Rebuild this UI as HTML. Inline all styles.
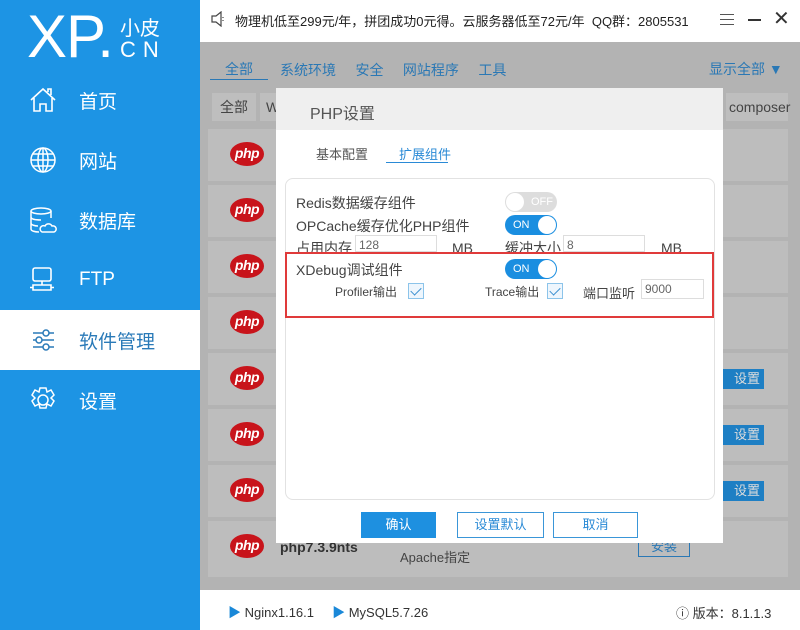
<!DOCTYPE html>
<html><head><meta charset="utf-8"><style>
*{margin:0;padding:0;box-sizing:border-box}
body{width:800px;height:630px;overflow:hidden;position:relative;font-family:"Liberation Sans","Noto Sans CJK SC",sans-serif;background:#b3b3b3}
.abs{position:absolute}
.side{left:0;top:0;width:200px;height:630px;background:#1d94e4;color:#fff}
.nav{position:absolute;left:0;width:200px;height:60px;font-size:19px;display:flex;align-items:center}
.nav svg{position:absolute;left:29px;top:16px}
.nav span{position:absolute;left:79px}
.row{position:absolute;left:208px;width:580px;height:52px;background:#bdbdbd}
.php{position:absolute;left:22px;top:13px;width:34px;height:24px;border-radius:50%;background:#c8141b;color:#fff;font-style:italic;font-weight:bold;font-size:14px;text-align:center;line-height:23px;letter-spacing:-0.5px}
.sw{position:absolute;width:52px;height:20px;border-radius:10px;background:#1a8ee0;color:#fff;font-size:11px;line-height:20px;padding-left:8px}
.sw i{position:absolute;right:1px;top:1px;width:18px;height:18px;border-radius:50%;background:#fff}
.lbl{position:absolute;font-size:14px;color:#444}
.inp{position:absolute;height:20px;border:1px solid #ddd;background:#fff;font-size:12px;color:#666;padding-left:3px;line-height:18px}
.cb{position:absolute;width:16px;height:16px;border:1px solid #8cc4ea;background:#eef6fd}
.cb:after{content:"";position:absolute;left:4px;top:1px;width:5px;height:9px;border:solid #3a8fd0;border-width:0 1.5px 1.5px 0;transform:rotate(45deg)}
.btn{position:absolute;top:512px;height:26px;border:1px solid #3a96d8;font-size:13px;text-align:center;line-height:24px;color:#2a8ad6;background:#fff}
</style></head><body>
<!-- header -->
<div class="abs" style="left:200px;top:0;width:600px;height:42px;background:#fff"></div>
<svg class="abs" style="left:211px;top:11px" width="16" height="16" viewBox="0 0 16 16" fill="none" stroke="#444" stroke-width="1.2"><path d="M1 5h4l5-4v14l-5-4H1z"/><path d="M12 6v1M12 9v1"/></svg>
<div class="abs" style="left:235px;top:11px;font-size:13px;color:#222">物理机低至299元/年，拼团成功0元得。云服务器低至72元/年&nbsp; QQ群：2805531</div>
<div class="abs" style="left:720px;top:14px;width:14px;height:11px;border-top:1px solid #555;border-bottom:1px solid #555"></div>
<div class="abs" style="left:720px;top:19px;width:14px;height:1px;background:#555"></div>
<div class="abs" style="left:748px;top:19px;width:13px;height:2px;background:#333"></div>
<div class="abs" style="left:773px;top:6px;font-size:20px;color:#333">✕</div>
<!-- tabs -->
<div class="abs" style="left:225px;top:59px;font-size:14px;color:#2a78b5">全部</div>
<div class="abs" style="left:210px;top:79px;width:58px;height:1px;background:#2a78b5"></div>
<div class="abs" style="left:280px;top:60px;font-size:14px;color:#2a78b5">系统环境&nbsp;&nbsp;&nbsp;&nbsp;&nbsp;安全&nbsp;&nbsp;&nbsp;&nbsp;&nbsp;网站程序&nbsp;&nbsp;&nbsp;&nbsp;&nbsp;工具</div>
<div class="abs" style="left:709px;top:59px;font-size:14px;color:#2a78b5">显示全部 ▼</div>
<div class="abs" style="left:212px;top:93px;width:44px;height:28px;background:#bebebe;font-size:14px;color:#444;line-height:28px;padding-left:8px">全部</div>
<div class="abs" style="left:260px;top:93px;width:20px;height:28px;background:#bebebe;font-size:14px;color:#444;line-height:28px;padding-left:6px">W</div>
<div class="abs" style="left:726px;top:93px;width:62px;height:28px;background:#bebebe;font-size:14px;color:#444;line-height:28px;padding-left:3px">composer</div>
<!-- rows -->
<div class="row" style="top:129px"><div class="php">php</div></div>
<div class="row" style="top:185px"><div class="php">php</div></div>
<div class="row" style="top:241px"><div class="php">php</div></div>
<div class="row" style="top:297px"><div class="php">php</div></div>
<div class="row" style="top:353px"><div class="php">php</div><div class="abs" style="left:514px;top:16px;width:42px;height:20px;background:#1e7fc4;color:#ddd;font-size:13px;line-height:20px;padding-left:12px">设置</div></div>
<div class="row" style="top:409px"><div class="php">php</div><div class="abs" style="left:514px;top:16px;width:42px;height:20px;background:#1e7fc4;color:#ddd;font-size:13px;line-height:20px;padding-left:12px">设置</div></div>
<div class="row" style="top:465px"><div class="php">php</div><div class="abs" style="left:514px;top:16px;width:42px;height:20px;background:#1e7fc4;color:#ddd;font-size:13px;line-height:20px;padding-left:12px">设置</div></div>
<div class="row" style="top:521px;height:56px"><div class="php">php</div>
<div class="abs" style="left:72px;top:18px;font-size:14px;font-weight:bold;color:#333">php7.3.9nts</div>
<div class="abs" style="left:192px;top:26px;font-size:13px;color:#444">Apache指定</div>
<div class="abs" style="left:430px;top:16px;width:52px;height:20px;border:1px solid #2a78b5;font-size:13px;color:#2a78b5;text-align:center;line-height:18px">安装</div></div>
<!-- footer -->
<div class="abs" style="left:200px;top:590px;width:600px;height:40px;background:#fff"></div>
<div class="abs" style="left:228px;top:602px;font-size:13px;color:#333"><span style="color:#1a88d8">▶</span> Nginx1.16.1&nbsp;&nbsp;&nbsp;&nbsp;&nbsp;<span style="color:#1a88d8">▶</span> MySQL5.7.26</div>
<div class="abs" style="left:676px;top:603px;font-size:13px;color:#333">ⓘ 版本：8.1.1.3</div>
<!-- sidebar -->
<div class="abs side">
<div class="abs" style="left:27px;top:4px;font-size:60px;font-weight:normal;letter-spacing:-1px;line-height:66px">XP.</div>
<div class="abs" style="left:120px;top:12px;font-size:20px">小皮</div>
<div class="abs" style="left:120px;top:37px;font-size:22px;letter-spacing:7px">CN</div>
<div class="nav" style="top:70px"><svg width="28" height="28" viewBox="0 0 28 28" fill="none" stroke="#fff" stroke-width="1.6"><path d="M2 14L14 3l12 11M5 12v13h6v-7h6v7h6V12M19 6V3h3v6"/></svg><span>首页</span></div>
<div class="nav" style="top:130px"><svg width="28" height="28" viewBox="0 0 28 28" fill="none" stroke="#fff" stroke-width="1.5"><circle cx="14" cy="14" r="12"/><ellipse cx="14" cy="14" rx="5" ry="12"/><path d="M2 14h24M4 8h20M4 20h20M14 2v24"/></svg><span>网站</span></div>
<div class="nav" style="top:190px"><svg width="28" height="28" viewBox="0 0 28 28" fill="none" stroke="#fff" stroke-width="1.5"><ellipse cx="12" cy="5" rx="10" ry="3"/><path d="M2 5v18c0 2 4 3 8 3M22 5v7M2 11c0 2 4 3 10 3M2 17c0 2 4 3 7 3"/><path d="M13 26h12a3 3 0 0 0-2-6 4 4 0 0 0-7 0 3 3 0 0 0-3 6z"/></svg><span>数据库</span></div>
<div class="nav" style="top:250px"><svg width="28" height="28" viewBox="0 0 28 28" fill="none" stroke="#fff" stroke-width="1.6"><rect x="4" y="2" width="18" height="13" rx="2"/><path d="M13 15v4M4 19h18v5H4zM1 21.5h3M22 21.5h3"/></svg><span>FTP</span></div>
<div class="abs" style="left:0;top:310px;width:200px;height:60px;background:#fff"></div>
<div class="nav" style="top:310px;color:#2a7ab8"><svg width="28" height="28" viewBox="0 0 28 28" fill="none" stroke="#2a7ab8" stroke-width="1.5"><path d="M4 7h10M20 7h5M4 14h3M13 14h12M4 21h10M20 21h5"/><circle cx="17" cy="7" r="3"/><circle cx="10" cy="14" r="3"/><circle cx="17" cy="21" r="3"/></svg><span>软件管理</span></div>
<div class="nav" style="top:370px"><svg width="28" height="28" viewBox="0 0 28 28" fill="none" stroke="#fff" stroke-width="1.5"><path d="M11 2h6l1 4 4-2 3 5-3 3 3 3-3 5-4-2-1 4h-6l-1-4-4 2-3-5 3-3-3-3 3-5 4 2z"/><circle cx="14" cy="14" r="5"/></svg><span>设置</span></div>
</div>
<!-- dialog -->
<div class="abs" style="left:276px;top:88px;width:447px;height:455px;background:#fff">
<div class="abs" style="left:0;top:0;width:447px;height:42px;background:#efefef"></div>
<div class="abs" style="left:34px;top:12px;font-size:16px;color:#555">PHP设置</div>
<div class="abs" style="left:40px;top:56px;font-size:13px;color:#555">基本配置</div>
<div class="abs" style="left:123px;top:56px;font-size:13px;color:#2a8ad6">扩展组件</div>
<div class="abs" style="left:110px;top:74px;width:62px;height:1px;background:#2a8ad6"></div>
<div class="abs" style="left:9px;top:90px;width:430px;height:322px;border:1px solid #e2e2e2;border-radius:8px"></div>
<div class="btn" style="left:85px;top:424px;width:75px;background:#1e90e0;color:#fff;border-color:#1e90e0">确认</div>
<div class="btn" style="left:181px;top:424px;width:87px">设置默认</div>
<div class="btn" style="left:277px;top:424px;width:85px">取消</div>
</div>
<div class="lbl" style="left:296px;top:193px">Redis数据缓存组件</div>
<div class="sw" style="left:505px;top:192px;background:#ddd;color:#fff"><i style="left:1px;right:auto"></i><span style="position:absolute;left:26px">OFF</span></div>
<div class="lbl" style="left:296px;top:216px">OPCache缓存优化PHP组件</div>
<div class="sw" style="left:505px;top:215px">ON<i></i></div>
<div class="lbl" style="left:296px;top:238px;height:14px;overflow:hidden;line-height:20px">占用内存</div>
<div class="inp" style="left:355px;top:235px;width:82px;height:17px">128</div>
<div class="lbl" style="left:452px;top:238px;height:14px;overflow:hidden;line-height:20px">MB</div>
<div class="lbl" style="left:505px;top:238px;height:14px;overflow:hidden;line-height:20px">缓冲大小</div>
<div class="inp" style="left:563px;top:235px;width:82px;height:17px">8</div>
<div class="lbl" style="left:661px;top:238px;height:14px;overflow:hidden;line-height:20px">MB</div>
<div class="abs" style="left:285px;top:252px;width:429px;height:66px;border:2.5px solid #e03a3a"></div>
<div class="lbl" style="left:296px;top:260px">XDebug调试组件</div>
<div class="sw" style="left:505px;top:259px">ON<i></i></div>
<div class="lbl" style="left:335px;top:283px;font-size:12px">Profiler输出</div>
<div class="cb" style="left:408px;top:283px"></div>
<div class="lbl" style="left:485px;top:283px;font-size:12px">Trace输出</div>
<div class="cb" style="left:547px;top:283px"></div>
<div class="lbl" style="left:583px;top:283px;font-size:13px">端口监听</div>
<div class="inp" style="left:641px;top:279px;width:63px">9000</div>
</body></html>
